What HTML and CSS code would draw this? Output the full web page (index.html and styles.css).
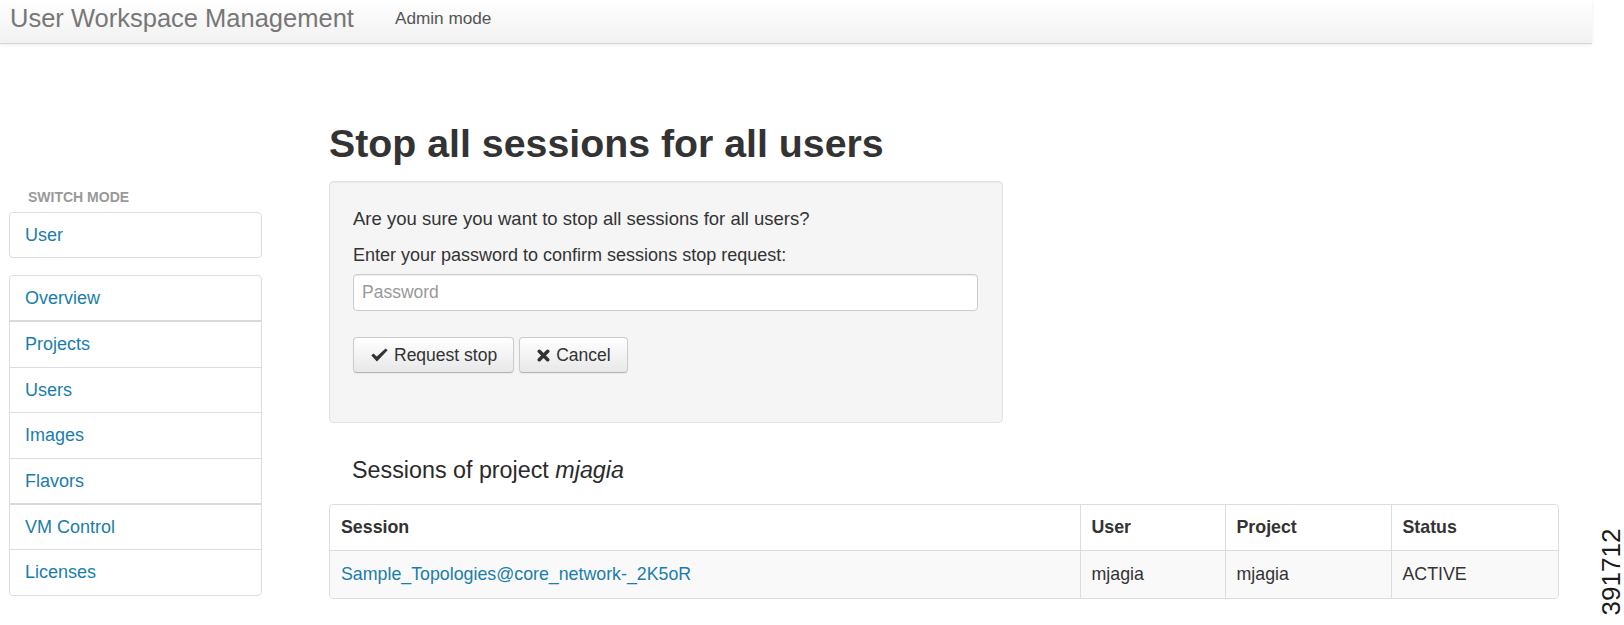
FILE: index.html
```html
<!DOCTYPE html>
<html lang="en">
<head>
  <meta charset="utf-8">
  <title>User Workspace Management</title>
  <link rel="stylesheet" href="styles.css">
</head>
<body>
  <div class=page>
    <header class=navbar>
      <a class=brand href="#">User Workspace Management</a>
      <a class=nav-link href="#">Admin mode</a>
    </header>

    <div class=layout>
      <aside class=sidebar>
        <div class=nav-header>Switch mode</div>
        <nav class=nav-list>
          <a href="#">User</a>
        </nav>
        <nav class="nav-list admin">
          <a href="#">Overview</a>
          <a href="#" class=group>Projects</a>
          <a href="#">Users</a>
          <a href="#">Images</a>
          <a href="#">Flavors</a>
          <a href="#" class=group>VM Control</a>
          <a href="#">Licenses</a>
        </nav>
      </aside>

      <main class=content>
        <h1>Stop all sessions for all users</h1>

        <form class=well>
          <p>Are you sure you want to stop all sessions for all users?</p>
          <label for=password>Enter your password to confirm sessions stop request:</label>
          <input type=password id=password placeholder="Password">
          <div class=actions>
            <button type=button class=btn>
              <svg class="icon icon-ok" width="17" height="14" viewBox="0 0 17 14"><path d="M0.3 7.6 L2.4 5.4 L5.8 8.6 L14.6 0.4 L16.6 2.3 L5.9 13.4 Z"/></svg>
              Request stop
            </button>
            <button type=button class=btn>
              <svg class="icon icon-remove" width="13" height="13" viewBox="0 0 13 13"><path d="M2.3 2.3 L10.7 10.7 M10.7 2.3 L2.3 10.7"/></svg>
              Cancel
            </button>
          </div>
        </form>

        <h4>Sessions of project <em>mjagia</em></h4>

        <div class=sessions>
          <table>
            <colgroup>
              <col class=c-session><col class=c-user><col class=c-project><col>
            </colgroup>
            <thead>
              <tr><th>Session</th><th>User</th><th>Project</th><th>Status</th></tr>
            </thead>
            <tbody>
              <tr>
                <td><a href="#">Sample_Topologies@core_network-_2K5oR</a></td>
                <td>mjagia</td>
                <td>mjagia</td>
                <td>ACTIVE</td>
              </tr>
            </tbody>
          </table>
        </div>
      </main>
    </div>
  </div>

  <div class=figure-id>391712</div>
</body>
</html>
```

FILE: styles.css
```css
body {
  margin: 0;
  font: 18px/23px 'Liberation Sans', Arial, sans-serif;
  color: #333;
  background: #fff;
}
a {
  color: #1b7dac;
  text-decoration: none;
}

.page {
  width: 1592px;
}

/* top bar */
.navbar {
  display: flex;
  align-items: flex-start;
  height: 44px;
  box-sizing: border-box;
  padding: 3px 0 0 10px;
  background: linear-gradient(#ffffff, #f1f1f1);
  border-bottom: 1px solid #d4d4d4;
  box-shadow: 0 1px 4px rgba(0,0,0,.07);
}
.brand {
  font-size: 25.5px;
  line-height: 30px;
  color: #777;
}
.nav-link {
  margin-left: 41px;
  font-size: 17.2px;
  line-height: 30px;
  color: #555;
}

.layout {
  display: flex;
}

/* sidebar */
.sidebar {
  width: 253px;
  margin-left: 9px;
  padding-top: 143px;
}
.nav-header {
  font-size: 14px;
  line-height: 20px;
  font-weight: bold;
  text-transform: uppercase;
  color: #999;
  padding-left: 19px;
  margin-bottom: 5px;
}
.nav-list {
  border: 1px solid #ddd;
  border-radius: 4px;
  margin-bottom: 17px;
}
.nav-list a {
  display: block;
  padding: 0 15px;
  line-height: 44px;
  border-top: 1px solid #ddd;
  font-size: 18px;
}
.nav-list a:first-child {
  border-top: 0;
}
.nav-list.admin a {
  line-height: 44.4px;
}
.nav-list a.group {
  border-top: 2px solid #dadada;
}

/* main column */
.content {
  width: 1230px;
  margin-left: 67px;
  padding-top: 76px;
}
h1 {
  margin: 0 0 15px;
  font-size: 39.3px;
  line-height: 46px;
  color: #333;
}

.well {
  margin: 0;
  padding: 25px 24px 49px 23px;
  background: #f5f5f5;
  border: 1px solid #e3e3e3;
  border-radius: 4px;
  box-shadow: inset 0 1px 1px rgba(0,0,0,.05);
  width: 674px;
  box-sizing: border-box;
}
.well p {
  margin: 0 0 14px;
  font-size: 18.5px;
}
.well label {
  display: block;
  margin-bottom: 7px;
  font-size: 18px;
}
.well input {
  display: block;
  width: 100%;
  height: 37px;
  box-sizing: border-box;
  padding: 0 8px;
  font: 17.5px 'Liberation Sans', Arial, sans-serif;
  color: #555;
  background: #fff;
  border: 1px solid #ccc;
  border-radius: 4px;
  box-shadow: inset 0 1px 1px rgba(0,0,0,.075);
}
.well input::placeholder {
  color: #999;
}

.actions {
  display: flex;
  gap: 5px;
  margin-top: 26px;
}
.btn {
  display: flex;
  align-items: center;
  gap: 6px;
  height: 36px;
  padding: 0 16px 0 17px;
  font: 17.5px 'Liberation Sans', Arial, sans-serif;
  color: #333;
  background: linear-gradient(#ffffff, #e8e8e8);
  border: 1px solid #ccc;
  border-bottom-color: #b3b3b3;
  border-radius: 4px;
  box-shadow: inset 0 1px 0 rgba(255,255,255,.2), 0 1px 2px rgba(0,0,0,.05);
}
.icon-ok path {
  fill: #333;
}
.icon-remove path {
  fill: none;
  stroke: #333;
  stroke-width: 3.6;
  stroke-linecap: round;
}

h4 {
  margin: 33px 0 20px 23px;
  font-size: 23.3px;
  line-height: 28px;
  font-weight: normal;
  color: #2a2a2a;
}

/* sessions table */
.sessions {
  border: 1px solid #ddd;
  border-radius: 4px;
  overflow: hidden;
}
table {
  width: 100%;
  border-collapse: collapse;
  table-layout: fixed;
}
col.c-session { width: 750px; }
col.c-user    { width: 145px; }
col.c-project { width: 166px; }
th, td {
  padding: 0 11px;
  text-align: left;
  border-left: 1px solid #ddd;
  font-size: 17.8px;
}
th:first-child, td:first-child {
  border-left: 0;
}
th {
  height: 45px;
  font-weight: bold;
}
td {
  height: 47px;
  border-top: 1px solid #ddd;
  background: #f9f9f9;
}

.figure-id {
  position: absolute;
  left: 1611px;
  top: 572px;
  transform: translate(-50%, -50%) rotate(-90deg);
  font: 26px/26px 'Liberation Sans', Arial, sans-serif;
  color: #1a1a1a;
}
```
